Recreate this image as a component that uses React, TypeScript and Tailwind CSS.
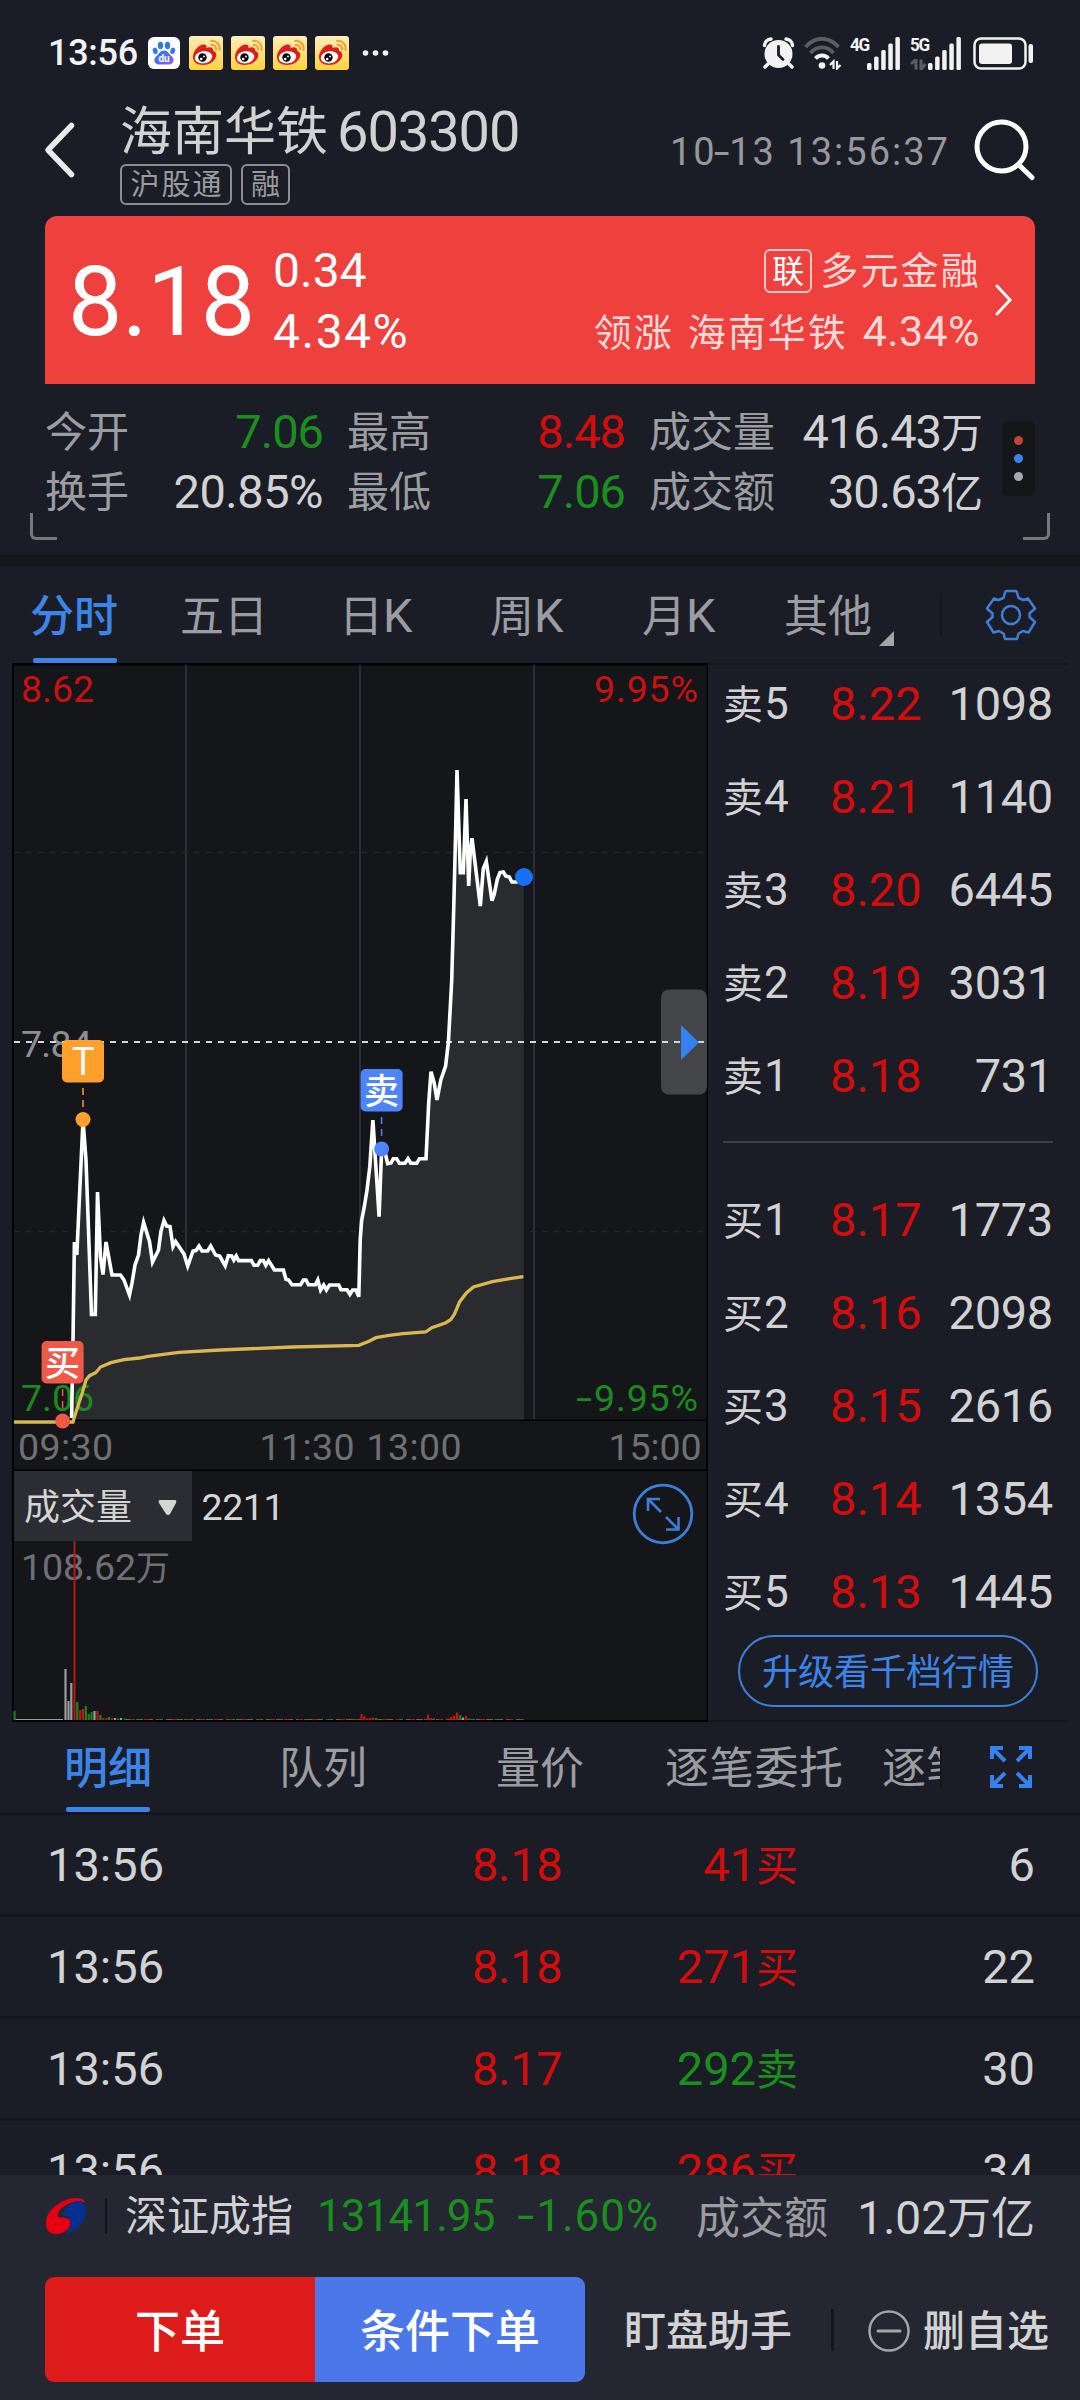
import React from 'react';

const PRICE =
  '71.6,1418 73,1340 74.4,1242 76.8,1255 83,1120 86,1160 91.5,1314.5 95.3,1314.5 97.5,1192 100.5,1257 103,1274.5 106,1242 112,1275 120.5,1275 124,1280 129.5,1295 132,1283 135,1265 138.5,1255 141,1235 143.6,1222.5 149.5,1241.5 152.5,1262 158.5,1250 161,1231 164,1220.5 166.7,1226 170,1226.5 173,1246.5 175.6,1241.5 184,1254 187.7,1266 193,1251 196,1250.5 199,1246 202,1251 207.6,1251 210.7,1246 215.6,1255 219.7,1256 225.2,1265.7 228.3,1255.7 231.7,1256 233.8,1260 236.2,1256 238.6,1260.6 251.4,1260.6 254,1265.3 257.6,1265.3 260.3,1260.6 263.4,1260.6 265.8,1265.3 268.6,1260.6 274.4,1270 283.4,1270 286,1279.3 288.6,1280 292,1284.7 300.6,1284.7 303.4,1280 306,1280 308.5,1284.7 315.4,1284.7 317.8,1280 320.6,1290 323.7,1285 326.4,1290 329.5,1285 338.8,1285 341,1289.7 347,1289.7 349.9,1294.3 352.6,1290 356,1290 358.8,1296.7 360.2,1240 361.6,1220.7 364.3,1206.7 367,1190 369.8,1166.7 372.9,1120 379.1,1216.7 381.5,1152 384.5,1150 387.7,1163.7 391,1163 393.3,1158.7 396.7,1158.7 399.4,1163.3 405,1163.3 408,1158.7 410.8,1163.3 416.7,1163.3 419.4,1158.7 426,1158.7 428.7,1103 431,1071.7 434.2,1083 437,1100 440.8,1080 445.6,1066 448.4,1042 451.7,981 453.7,909.6 455.7,829 457,770 460.3,872.6 463.3,872.6 466,799 468.7,886 470.3,851.6 472,838.2 474.3,857 480.3,906 483.3,868.6 486.3,861.4 490,887 492,900.7 494.3,894 497.3,879.3 500,872.6 503.3,872 505.7,876 509.3,877 512,882 516.7,882 523.7,877';

const AVERAGE =
  '14,1422 73,1422 74.4,1417 82.6,1391.7 86,1380 89.5,1375.7 95.7,1372.7 100.5,1367 110.9,1362.7 124,1359.7 139.5,1358 148,1356.3 179,1352.3 220.4,1350 292.7,1347 358.8,1345.3 369,1341.3 376,1337.7 389,1335.3 403,1333.7 425.6,1332 431.8,1327.7 446,1322.7 451,1319.3 454.5,1314 459.7,1301.7 466.6,1292.7 473.5,1287 492.4,1281.7 509.6,1278.7 523.4,1276.7';

const R = '#c01515';
const G = '#1b841d';
const W = '#9c9c9f';
const VOLUME: [number, number, string][] = [
  [14.5, 9, G], [65.5, 51, W], [68.5, 19, W], [71.3, 37, W], [77.3, 18, G], [80.2, 10, R], [83, 11, R],
  [85.8, 14, G], [88.7, 6, G], [91.6, 8, G], [94.5, 9, W], [97.5, 9, R], [100.4, 5, G], [103.3, 2, R],
  [106.2, 2, R], [109, 3, G], [112, 2, R], [115, 2, W], [118, 1.5, G], [121, 2, W], [125, 1.5, G],
  [361.5, 6, R], [364.4, 4, R], [367.3, 1.5, R], [370.2, 2, R], [373.2, 2.5, R], [376, 2, G],
  [428, 5.5, R], [431, 2, R], [434, 1.5, G], [448, 1.5, R], [451, 3, R], [454, 4.5, R], [457, 7.5, R],
  [460, 5, G], [463, 2.5, W], [466, 4, R], [469, 1.5, G],
];

const SELLS = [['卖5', '8.22', '1098'], ['卖4', '8.21', '1140'], ['卖3', '8.20', '6445'], ['卖2', '8.19', '3031'], ['卖1', '8.18', '731']];
const BUYS = [['买1', '8.17', '1773'], ['买2', '8.16', '2098'], ['买3', '8.15', '2616'], ['买4', '8.14', '1354'], ['买5', '8.13', '1445']];
const TICKS: [string, string, boolean, string][] = [
  ['8.18', '41', true, '6'], ['8.18', '271', true, '22'], ['8.17', '292', false, '30'], ['8.18', '286', true, '34'],
];

function Weibo() {
  return (
    <svg className="ml-2 h-[34px] w-[34px]" viewBox="0 0 34 34">
      <defs>
        <linearGradient id="wb" x1="0" y1="0" x2="0" y2="1">
          <stop offset="0" stopColor="#fdeebd" />
          <stop offset="1" stopColor="#ffd23c" />
        </linearGradient>
      </defs>
      <rect width="34" height="34" rx="3" fill="url(#wb)" />
      <path d="M4 21C4 15 9 9.500 14 8.500C17 8 18 9.500 17.500 12C21 10.500 24.500 11 24 14.500C27 16 28 18 27 21C25 26 20 29 14 29C8 29 4 26 4 21Z" fill="#dc1f1c" />
      <ellipse cx="14.500" cy="21.300" rx="8.800" ry="6" transform="rotate(-8 14.500 21.300)" fill="#fff" />
      <circle cx="13.500" cy="21.500" r="4.200" fill="#0a0a0a" />
      <circle cx="12.200" cy="23" r="1.300" fill="#fff" />
      <circle cx="15" cy="20.500" r=".9" fill="#fff" />
      <path d="M22 5C27 4 31.500 8.500 30.500 14M22.500 9C25.500 8.800 27.500 10.800 27 13.500" fill="none" stroke="#efa22f" strokeWidth="2" strokeLinecap="round" />
    </svg>
  );
}

function SignalBars({ className }: { className: string }) {
  return (
    <svg className={className} viewBox="0 0 33 33">
      <g fill="#f2f2f2">
        <rect x="0" y="26" width="4.500" height="7" rx="1.500" />
        <rect x="7.100" y="19.500" width="4.500" height="13.500" rx="1.500" />
        <rect x="14.200" y="13" width="4.500" height="20" rx="1.500" />
        <rect x="21.300" y="6.500" width="4.500" height="26.500" rx="1.500" />
        <rect x="28.400" y="0" width="4.500" height="33" rx="1.500" />
      </g>
    </svg>
  );
}

function StatusBar() {
  return (
    <div className="flex h-[106px] items-center pl-[48px] text-[#f2f2f2]">
      <span className="w-[100px] text-[36px] leading-none font-medium tracking-[-0.3px]">13:56</span>
      <svg className="h-8 w-8" viewBox="0 0 32 32">
        <defs>
          <linearGradient id="bd" x1="0" y1="0" x2="1" y2="1">
            <stop offset=".2" stopColor="#2f7ae6" />
            <stop offset=".9" stopColor="#8a5cf0" />
          </linearGradient>
        </defs>
        <rect width="32" height="32" rx="6" fill="#fff" />
        <g fill="#2f7ae6">
          <ellipse cx="12.500" cy="8.500" rx="2.700" ry="3.700" />
          <ellipse cx="19.500" cy="8.500" rx="2.700" ry="3.700" />
          <ellipse cx="7.200" cy="13.800" rx="2.400" ry="3.200" transform="rotate(-15 7.200 13.800)" />
          <ellipse cx="24.700" cy="13.800" rx="2.400" ry="3.200" transform="rotate(15 24.700 13.800)" />
        </g>
        <path d="M16 13.500C20 13.500 21 17 23.500 19C27 22 26 27.500 21 27.500H11C6 27.500 5 22 8.500 19C11 17 12 13.500 16 13.500Z" fill="url(#bd)" />
        <text x="16" y="25" textAnchor="middle" fontSize="10" fontWeight="700" fill="#fff">du</text>
      </svg>
      <span className="w-px" />
      <Weibo /><Weibo /><Weibo /><Weibo />
      <svg className="ml-[13px] h-[6px] w-[28px]" viewBox="0 0 28 6" fill="#f2f2f2">
        <circle cx="3.500" cy="3" r="2.800" /><circle cx="13.500" cy="3" r="2.800" /><circle cx="23.500" cy="3" r="2.800" />
      </svg>
      <svg className="ml-[372px] h-8 w-[33px]" viewBox="0 0 33 32">
        <circle cx="16.500" cy="17" r="14" fill="#f2f2f2" />
        <path d="M2.500 8.500A7 7 0 0 1 9 2M30.500 8.500A7 7 0 0 0 24 2" stroke="#f2f2f2" strokeWidth="3.500" fill="none" strokeLinecap="round" />
        <path d="M6 27L3 30M27 27L30 30" stroke="#f2f2f2" strokeWidth="3.500" strokeLinecap="round" />
        <path d="M16.500 9.500V18L21 22.500" stroke="#1b1d26" strokeWidth="2.800" fill="none" strokeLinecap="round" />
      </svg>
      <svg className="ml-[9px] h-[33px] w-[38px]" viewBox="0 0 38 33" fill="none">
        <path d="M1.500 10C11 -1 25 -1 34.500 10" stroke="#5c5d62" strokeWidth="3.800" />
        <path d="M6.500 16C13 8.500 23 8.500 29.500 16" stroke="#5c5d62" strokeWidth="3.800" />
        <path d="M11.500 21.500C15 17.500 21 17.500 24.500 21.500" stroke="#f2f2f2" strokeWidth="3.800" />
        <circle cx="18" cy="28.500" r="3.300" fill="#f2f2f2" />
        <path d="M26 28L29.500 24.500V32M33 24V31.500L36.500 28" stroke="#f2f2f2" strokeWidth="2.200" />
      </svg>
      <div className="ml-2 flex h-[33px] w-[17px] flex-col items-start">
        <span className="origin-left scale-x-90 text-[19px] leading-[16px] font-bold tracking-[-1.500px]">4G</span>
      </div>
      <SignalBars className="h-[33px] w-[33px]" />
      <div className="ml-[10px] flex h-[33px] w-[18px] flex-col items-start justify-between">
        <span className="origin-left scale-x-90 text-[19px] leading-[16px] font-bold tracking-[-1.500px]">5G</span>
        <svg className="h-[11px] w-[17px]" viewBox="0 0 17 11" fill="none">
          <path d="M1 5L6 0.500V10.500M11 0.500V10.500L15.500 5" stroke="#5c5d62" strokeWidth="3" />
        </svg>
      </div>
      <SignalBars className="h-[33px] w-[33px]" />
      <svg className="ml-[12px] h-[33px] w-[61px]" viewBox="0 0 61 33">
        <rect x="1.500" y="1.500" width="51" height="30" rx="6.500" fill="none" stroke="#f2f2f2" strokeWidth="2.500" />
        <rect x="6" y="6.500" width="33" height="20.500" rx="3" fill="#f2f2f2" />
        <rect x="55.500" y="7" width="4.500" height="19" rx="2" fill="#f2f2f2" />
      </svg>
    </div>
  );
}

function Header() {
  return (
    <div className="flex h-[110px]">
      <svg className="mt-[15px] ml-[43px] h-[58px] w-[34px]" viewBox="0 0 34 58" fill="none">
        <path d="M28.500 4.500L5 29L28.500 53.500" stroke="#eaeaea" strokeWidth="5.500" strokeLinecap="round" strokeLinejoin="round" />
      </svg>
      <div className="ml-[43px] w-[550px]">
        <div className="mt-[-6px] flex h-[62px] items-center text-[#d2d2d2]">
          <span className="pt-[3px] text-[52px] leading-none">海南华铁</span>
          <span className="ml-[9px] pt-[1px] text-[56px] leading-none tracking-[-1.1px]">603300</span>
        </div>
        <div className="mt-[2px] flex gap-[9px] text-[29px] leading-none text-[#9a9b9f]">
          <span className="flex h-[41px] w-[112px] items-center justify-center rounded-[6px] border-2 border-[#8d8e92] pt-[2px] pl-[2px] tracking-[2px]">沪股通</span>
          <span className="flex h-[41px] w-[49px] items-center justify-center rounded-[6px] border-2 border-[#8d8e92] pt-[2px]">融</span>
        </div>
      </div>
      <span className="mt-[27px] w-[303px] text-[38px] leading-[38px] tracking-[2px] whitespace-nowrap text-[#97989b]">10<span className="inline-block scale-x-150">-</span>13 13:56:37</span>
      <svg className="mt-[12px] h-[64px] w-[64px]" viewBox="973 118 64 64" fill="none" stroke="#fff" strokeLinecap="round">
        <circle cx="1001.500" cy="146.500" r="24.500" strokeWidth="5" />
        <path d="M1019 165L1032 177.500" strokeWidth="5" />
      </svg>
    </div>
  );
}

function Quote() {
  return (
    <div className="mx-[45px] flex h-[168px] rounded-t-[12px] bg-[#ee403d] text-white">
      <span className="mt-[36px] ml-[23px] w-[203px] text-[97px] leading-[100px] tracking-[-0.600px]">8.18</span>
      <div className="mt-[24px] w-[160px] text-[48px] leading-[61px]">
        <div className="ml-[2px]">0.34</div>
        <div className="ml-[2px] tracking-[1.500px]">4.34%</div>
      </div>
      <div className="mt-[24px] ml-auto text-right text-[38px] leading-[61px] tracking-[2px] text-[#ffd9d8]">
        <div className="flex items-center justify-end">
          <span className="mr-[8px] flex h-[44px] w-[48px] items-center justify-center rounded-[6px] border-2 border-[#ffc9c8] pt-[2px] text-[32px] leading-none tracking-normal text-white">联</span>
          <span className="mr-[-1px] pt-[2px] leading-[59px] tracking-[2.200px]">多元金融</span>
        </div>
        <div className="whitespace-nowrap">领涨<span className="ml-[14px]">海南华铁</span><span className="ml-[15px] text-[43px] tracking-[0.400px]">4.34%</span></div>
      </div>
      <svg className="mt-[68px] mr-[22px] ml-[15px] h-[32px] w-[18px]" viewBox="0 0 18 32" fill="none">
        <path d="M2 2L15 16L2 30" stroke="#fff" strokeWidth="3" strokeLinecap="round" />
      </svg>
    </div>
  );
}

function Stats() {
  return (
    <div className="relative h-[171px] pt-[17px]">
      <div className="grid h-[120px] w-[983px] grid-cols-[84px_194px_108px_194px_142px_auto] grid-rows-2 items-center pl-[45px] text-[42px] leading-none whitespace-nowrap text-[#9c9da0]">
        <span className="pt-[3px]">今开</span>
        <span className="text-right text-[47px] tracking-[-1px] text-[#1b8f1e]">7.06</span>
        <span className="ml-[24px] pt-[3px]">最高</span>
        <span className="text-right text-[47px] tracking-[-1px] text-[#d30c0c]">8.48</span>
        <span className="ml-[24px] pt-[3px]">成交量</span>
        <span className="text-right text-[#d2d2d2]"><span className="text-[47px] tracking-[-1px]">416.43</span>万</span>
        <span className="pt-[3px]">换手</span>
        <span className="text-right text-[47px] tracking-[-0.500px] text-[#d2d2d2]">20.85%</span>
        <span className="ml-[24px] pt-[3px]">最低</span>
        <span className="text-right text-[47px] tracking-[-1px] text-[#1b8f1e]">7.06</span>
        <span className="ml-[24px] pt-[3px]">成交额</span>
        <span className="text-right text-[#d2d2d2]"><span className="text-[47px] tracking-[-1px]">30.63</span>亿</span>
      </div>
      <div className="absolute top-[37px] right-[45px] flex h-[75px] w-[33px] flex-col items-center justify-center gap-[9px] rounded-[6px] bg-[#15161a]">
        <i className="h-[9px] w-[9px] rounded-full bg-[#c24432]" />
        <i className="h-[9px] w-[9px] rounded-full bg-[#3c83ee]" />
        <i className="h-[9px] w-[9px] rounded-full bg-[#a9a9ad]" />
      </div>
      <i className="absolute top-[129px] left-[30px] h-[27px] w-[27px] rounded-bl-[6px] border-b-[3px] border-l-[3px] border-[#77787c]" />
      <i className="absolute top-[129px] right-[30px] h-[27px] w-[27px] rounded-br-[6px] border-r-[3px] border-b-[3px] border-[#77787c]" />
    </div>
  );
}

function ChartTabs() {
  return (
    <div className="relative flex h-[96px] items-center text-[44px] leading-none text-[#9c9da0]">
      <span className="ml-[30px] w-[150px] pt-[3px] font-medium text-[#3d84e8]">分时</span>
      <span className="w-[159px] pt-[3px]">五日</span>
      <span className="w-[151px]">日<span className="text-[47px]">K</span></span>
      <span className="w-[152px]">周<span className="text-[47px]">K</span></span>
      <span className="w-[142px]">月<span className="text-[47px]">K</span></span>
      <span className="w-[95px] pt-[3px]">其他</span>
      <svg className="mt-[46px] h-[15px] w-[15px]" viewBox="0 0 15 15"><path d="M15 0V15H0Z" fill="#a5a5a8" /></svg>
      <i className="ml-[46px] h-[45px] w-[2px] bg-[#15161a]" />
      <svg className="ml-[43px] h-[52px] w-[52px]" viewBox="-26 -26 52 52" fill="none" stroke="#3d7fd8" strokeWidth="2.500" strokeLinejoin="round">
        <circle r="9" />
        <path d="M-6 -22.500Q-5.800 -24 -4.500 -24H4.500Q5.800 -24 6 -22.500L7.500 -17L12.500 -15L17 -16.500L24 -6.500L18.500 -1.500V2L24 7L17.500 17.500L12 16L7.500 18.500L6 24H-6L-7.500 18.500L-12 16L-17.500 17.500L-24 7L-18.500 2V-1.500L-24 -6.500L-17 -16.500L-12.500 -15L-7.500 -17Z" />
      </svg>
      <i className="absolute bottom-0 left-[33px] h-[5px] w-[84px] rounded-[2px] bg-[#3d84e8]" />
    </div>
  );
}

function Marker({ x, y, dot, color, label }: { x: number; y: number; dot: number; color: string; label: string }) {
  return (
    <g>
      <rect x={x - 21} y={y} width="42" height="42.500" rx="5" fill={color} />
      <text x={x} y={y + (label === 'T' ? 35 : 35)} textAnchor="middle" fontSize={label === 'T' ? 38 : 35} fontWeight={label === 'T' ? 400 : 500} fill="#fff">{label}</text>
      <path d={`M${x} ${y + 48}V${y + 68}`} stroke={color} strokeWidth="1.500" strokeDasharray="7 5" />
      <circle cx={x} cy={dot} r="7.500" fill={color} />
    </g>
  );
}

function Chart() {
  return (
    <svg className="h-[1059px] w-[708px] shrink-0" viewBox="0 663 708 1059" fontSize="37.500">
      <rect x="12" y="663" width="697" height="1059" fill="#020306" />
      <rect x="14" y="665.500" width="692.500" height="754" fill="#15161a" />
      <rect x="14" y="1421" width="692" height="48.500" fill="#15161a" />
      <rect x="14" y="1471" width="692.500" height="249" fill="#15161a" />
      <g stroke="#2b2d38" strokeWidth="2">
        <path d="M186 665V1419M360 665V1419M534 665V1419" />
      </g>
      <path d="M14 852.500H706M14 1231.500H706" stroke="#24252a" strokeWidth="1.500" strokeDasharray="6 6" />
      <polygon points={`71.600,1419.500 ${PRICE} 524,1419.500`} fill="#2a2b2f" />
      <text x="21" y="1056.500" fill="#8d8e91" textLength="71">7.84</text>
      <text x="21" y="701.500" fill="#c81111" textLength="73">8.62</text>
      <text x="698" y="701.500" fill="#c81111" textAnchor="end" textLength="104">9.95%</text>
      <text x="21" y="1410.500" fill="#1b8a1e" textLength="73">7.06</text>
      <text transform="translate(576 1410.500) scale(1.550 1)" fill="#1b8a1e">-</text>
      <text x="698" y="1410.500" fill="#1b8a1e" textAnchor="end" textLength="104">9.95%</text>
      <rect x="661" y="989.500" width="46" height="105" rx="8" fill="#444549" />
      <path d="M14 1042H704" stroke="#d5d5d5" strokeWidth="2" strokeDasharray="6 6" />
      <path d="M681 1025L699 1042.500L681 1060Z" fill="#3581f0" />
      <polyline points={PRICE} fill="none" stroke="#fff" strokeWidth="3.600" />
      <polyline points={AVERAGE} fill="none" stroke="#dbb751" strokeWidth="3.300" />
      <circle cx="524" cy="877" r="9" fill="#1a70f5" />
      <Marker x={83} y={1040} dot={1119.5} color="#ff9f2c" label="T" />
      <Marker x={381.6} y={1069} dot={1149} color="#4c84fa" label="卖" />
      <Marker x={62.6} y={1341} dot={1421} color="#ee5a47" label="买" />
      <g fill="#6f7074">
        <text x="18" y="1459.500" textLength="95">09:30</text>
        <text x="259.500" y="1459.500" textLength="95">11:30</text>
        <text x="366.500" y="1459.500" textLength="95">13:00</text>
        <text x="701.500" y="1459.500" textAnchor="end" textLength="93">15:00</text>
        <text x="21" y="1579.500" textLength="149">108.62<tspan fontSize="34">万</tspan></text>
      </g>
      <rect x="14" y="1471" width="178" height="70" fill="#2c2d32" />
      <text x="24" y="1520" fontSize="36" fill="#d5d5d5">成交量</text>
      <path d="M160 1500H175Q177 1500 176 1503L170 1514Q168 1516 166 1514L159 1503Q158 1500 160 1500Z" fill="#d5d5d5" />
      <text x="201.500" y="1520" fill="#d5d5d5" textLength="83">2211</text>
      <g fill="none" stroke="#3d7fd8" strokeWidth="2.800">
        <circle cx="663" cy="1514" r="28.800" />
        <path d="M661 1512L648 1499M660 1499H648V1511M666 1517L678.500 1529.500M666 1529.500H678.500V1517" strokeWidth="2.600" />
      </g>
      <path d="M15 1719.500H63" stroke={W} strokeWidth="1" />
      <path d="M126 1719.500H524" stroke="#6b6259" strokeWidth="1" strokeDasharray="7 3" />
      <path d="M130 1719.500H524" stroke={R} strokeWidth="1" strokeDasharray="5 9" />
      <path d="M136 1719.500H524" stroke={G} strokeWidth="1" strokeDasharray="3 21" />
      {VOLUME.map(([x, h, c]) => <rect key={x} x={x - 1.1} y={1720 - h} width="2.200" height={h} fill={c} />)}
      <rect x="73.500" y="1541" width="2" height="179" fill="#c01515" />
    </svg>
  );
}

function BookRow({ row }: { row: string[] }) {
  return (
    <div className="flex h-[93px] items-center text-[47px] leading-none text-[#d2d2d2]">
      <span className="ml-[15px] w-[92px] text-[40px]">{row[0][0]}<span className="ml-[1px] text-[44px]">{row[0][1]}</span></span>
      <span className="w-[110px] pl-[15px] text-[#d30c0c]">{row[1]}</span>
      <span className="ml-auto pr-[15px] tracking-[-0.300px]">{row[2]}</span>
    </div>
  );
}

function OrderBook() {
  return (
    <div className="flex w-[360px] flex-col border-y-2 border-[#15161a]">
      <div className="-mt-[8px]">{SELLS.map((r) => <BookRow key={r[0]} row={r} />)}</div>
      <i className="mt-[19px] ml-[15px] h-[2px] w-[330px] shrink-0 bg-[#3c3f4c]" />
      <div className="mt-[30px]">{BUYS.map((r) => <BookRow key={r[0]} row={r} />)}</div>
      <button className="-mt-[3px] ml-[30px] h-[72px] w-[300px] shrink-0 rounded-full border-2 border-[#3d7fd8] pt-[3px] text-[36px] leading-none text-[#3d84e8]">升级看千档行情</button>
    </div>
  );
}

function DetailTabs() {
  return (
    <div className="relative flex h-[90px] items-center text-[44px] leading-none whitespace-nowrap text-[#9c9da0]">
      <span className="ml-[64px] w-[215px] pt-[3px] font-medium text-[#3d84e8]">明细</span>
      <span className="w-[217px] pt-[3px]">队列</span>
      <span className="w-[169px] pt-[3px]">量价</span>
      <span className="w-[217px] pt-[3px] tracking-[0.700px]">逐笔委托</span>
      <span className="w-[58px] overflow-hidden pt-[3px] leading-[60px]">逐笔</span>
      <i className="h-[45px] w-[2px] bg-[#15161a]" />
      <svg className="ml-[47px] h-[44px] w-[44px]" viewBox="0 0 44 44" fill="none" stroke="#3581f0" strokeWidth="4">
        <path d="M3 14V3H14M3 3L16 16M30 3H41V14M41 3L28 16M3 30V41H14M3 41L16 28M30 41H41V30M41 41L28 28" />
      </svg>
      <i className="absolute bottom-0 left-[66px] h-[5px] w-[84px] rounded-[2px] bg-[#3d84e8]" />
    </div>
  );
}

function Trades() {
  return (
    <div className="h-[363px] overflow-hidden">
      {TICKS.map(([price, vol, buy, n], i) => (
        <div key={i} className="flex h-[102px] items-center border-t-[3px] border-[#15161c] text-[47px] leading-none text-[#d2d2d2]">
          <span className="ml-[47px] w-[425px]">13:56</span>
          <span className="w-[121px] tracking-[-0.300px] text-[#d30c0c]">{price}</span>
          <span className={buy ? 'w-[205px] text-right text-[#d30c0c]' : 'w-[205px] text-right text-[#1b8f1e]'}>{vol}<span className="text-[42px]">{buy ? '买' : '卖'}</span></span>
          <span className="mr-[45px] ml-auto">{n}</span>
        </div>
      ))}
    </div>
  );
}

function Footer() {
  return (
    <div className="h-[225px] bg-[#242632]">
      <div className="flex h-[81px] items-center text-[42px] leading-none whitespace-nowrap">
        <svg className="ml-[45px] h-[38px] w-[42px]" viewBox="0 0 42 38">
          <path d="M1 27C-1 15 17 0 33 1C38 1.500 40 4 40.500 6C34 1 17 7 13 16C10 24 22 17 25 24C27 31 19 37 11 37C4 37 1 32 1 27Z" fill="#e60012" />
          <path d="M33 4C39 5 42 9 41 16C39 27 30 35 20 37C26 32 28 25 23 20C20 18 17 19 18 17C20 10 27 4 33 4Z" fill="#06308f" />
        </svg>
        <i className="ml-[18px] h-[36px] w-[2px] bg-[#13141a]" />
        <span className="ml-[18px] w-[192px] pt-[2px] text-[#d2d2d2]">深证成指</span>
        <span className="w-[203px] text-[44px] tracking-[-0.900px] text-[#1b8f1e]">13141.95</span>
        <span className="w-[176px] text-[44px] tracking-[1px] text-[#1b8f1e]"><span className="mr-[3px] inline-block scale-x-140">-</span>1.60%</span>
        <span className="pt-[6px] text-[44px] text-[#9c9da0]">成交额</span>
        <span className="mr-[45px] ml-auto pt-[4px] text-[44px] text-[#d2d2d2]"><span className="text-[46px]">1.02</span>万亿</span>
      </div>
      <div className="mt-[21px] flex h-[105px] items-center text-[42px] leading-none font-medium text-[#d2d2d2]">
        <button className="ml-[45px] h-[105px] w-[270px] rounded-l-[9px] bg-[#dc1b1a] pt-[5px] text-[45px] text-white">下单</button>
        <button className="h-[105px] w-[270px] rounded-r-[9px] bg-[#4c77e8] pt-[5px] text-[45px] text-white">条件下单</button>
        <span className="ml-[39px] w-[207px] pt-[5px]">盯盘助手</span>
        <i className="h-[42px] w-[3px] bg-[#15161c]" />
        <svg className="ml-[33px] h-[44px] w-[44px]" viewBox="0 0 44 44" fill="none" stroke="#a5a5a9">
          <circle cx="22" cy="23" r="19.500" strokeWidth="2.500" />
          <path d="M11 23H33" strokeWidth="3" strokeLinecap="round" />
        </svg>
        <span className="ml-[12px] pt-[5px]">删自选</span>
      </div>
    </div>
  );
}

export default function App() {
  return (
    <div className="h-[2400px] w-[1080px] overflow-hidden bg-[#1b1d26] font-[Roboto,'Noto_Sans_CJK_SC',sans-serif]">
      <StatusBar />
      <Header />
      <Quote />
      <Stats />
      <div className="h-[12px] bg-[#15171a]" />
      <ChartTabs />
      <div className="flex h-[1059px]">
        <Chart />
        <OrderBook />
      </div>
      <DetailTabs />
      <Trades />
      <Footer />
    </div>
  );
}
